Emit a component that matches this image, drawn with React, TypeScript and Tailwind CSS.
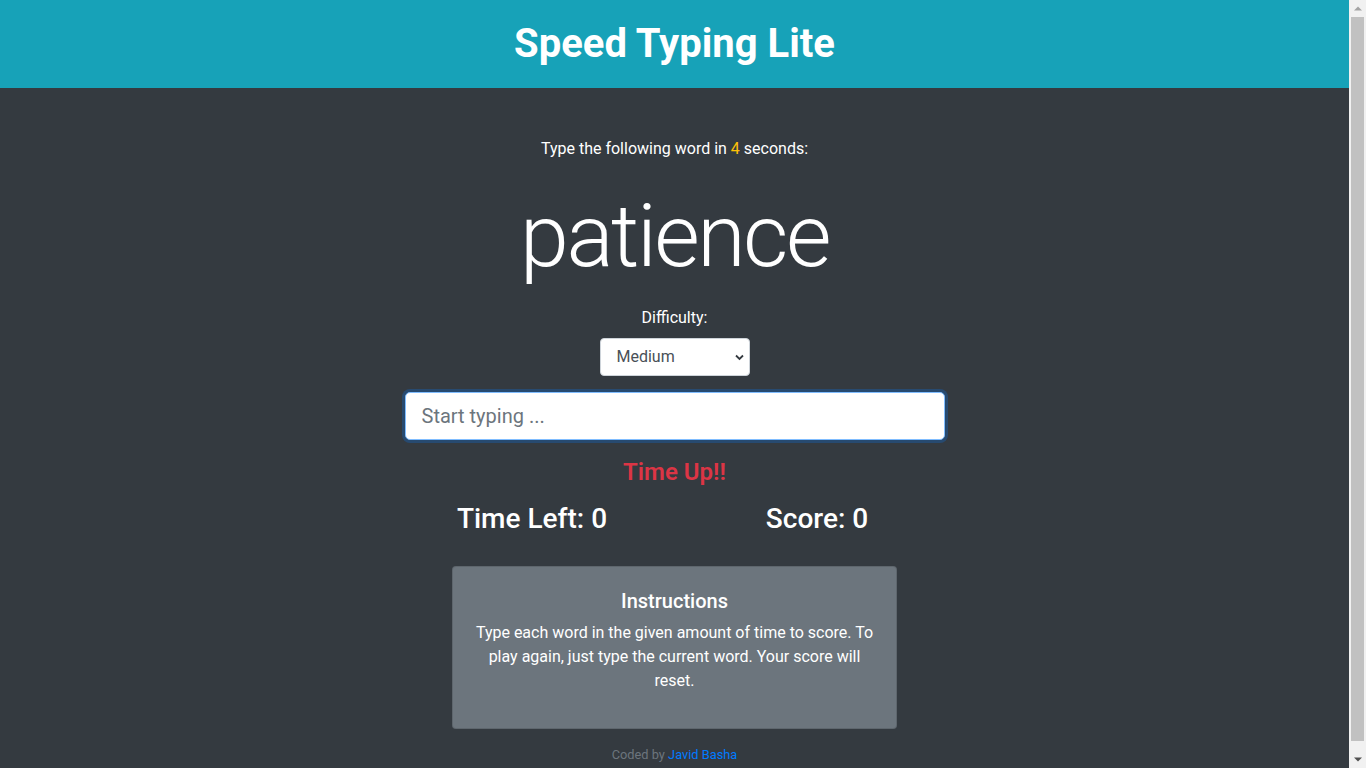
import React from "react";

function Scrollbar() {
  return (
    <div className="sticky top-0 flex h-screen w-[17px] shrink-0 flex-col self-start bg-[#f1f1f1]">
      <div className="flex h-[17px] items-center justify-center">
        <svg width="8" height="5" viewBox="0 0 8 5">
          <path d="M0 4.5 L4 0.5 L8 4.5 Z" fill="#a3a3a3" />
        </svg>
      </div>
      <div className="mx-[2px] h-[724px] bg-[#c1c1c1]" />
      <div className="flex-1" />
      <div className="flex h-[17px] items-center justify-center">
        <svg width="8" height="5" viewBox="0 0 8 5">
          <path d="M0 0.5 L8 0.5 L4 4.5 Z" fill="#505050" />
        </svg>
      </div>
    </div>
  );
}

export default function App() {
  return (
    <div className="flex bg-[#343a40] font-['Roboto',sans-serif] text-white">
      <div className="min-h-[779px] min-w-0 flex-1">
        <header className="flex h-[88px] items-center justify-center bg-[#17a2b8]">
          <h1 className="text-[40px] font-bold leading-[48px] text-white">Speed Typing Lite</h1>
        </header>

        <main className="flex flex-col items-center">
          <p className="mt-[49px] text-[16px] leading-[24px] text-white">
            Type the following word in <span className="text-[#ffc107]">4</span> seconds:
          </p>

          <h2 className="mt-[22px] text-[88px] font-light leading-[1.2] tracking-[-2.5px] text-white">patience</h2>

          <label className="mt-[17px] text-[16px] leading-[24px] text-white">Difficulty:</label>

          <div className="relative mt-[8px] h-[38px] w-[150px]">
            <select
              defaultValue="medium"
              className="h-full w-full appearance-none rounded-[4px] border border-[#ced4da] bg-white pl-[16px] pr-[28px] text-[16px] text-[#495057] outline-none"
            >
              <option value="easy">Easy</option>
              <option value="medium">Medium</option>
              <option value="hard">Hard</option>
            </select>
            <svg
              className="pointer-events-none absolute right-[6px] top-[16px]"
              width="9"
              height="7"
              viewBox="0 0 9 7"
              fill="none"
            >
              <path d="M1 1.5 L4.5 5 L8 1.5" stroke="#343a40" strokeWidth="1.8" />
            </svg>
          </div>

          <input
            type="text"
            placeholder="Start typing ..."
            className="mt-[16px] h-[48px] w-[540px] rounded-[5px] border border-[#80bdff] bg-white px-[16px] text-[20px] text-[#495057] shadow-[0_0_0_3px_rgba(0,123,255,0.25)] outline-none placeholder:text-[#6c757d]"
          />

          <h4 className="mt-[18px] text-[24px] font-semibold leading-[29px] text-[#dc3545]">Time Up!!</h4>

          <div className="mt-[15px] grid w-[570px] grid-cols-2">
            <h3 className="text-center text-[28px] font-medium leading-[34px] text-white">Time Left: 0</h3>
            <h3 className="text-center text-[28px] font-medium leading-[34px] text-white">Score: 0</h3>
          </div>

          <div className="mt-[30px] w-[445px] rounded-[4px] border border-[rgba(0,0,0,0.125)] bg-[#6c757d] px-[20px] pb-[20px] pt-[22px] text-center">
            <h5 className="mb-[8px] text-[20px] font-medium leading-[24px] text-white">Instructions</h5>
            <p className="mb-[15px] text-[16px] leading-[24px] text-white">
              Type each word in the given amount of time to score. To play again, just type the current word. Your
              score will reset.
            </p>
          </div>

          <footer className="mt-[16px] text-[12.8px] leading-[19px] text-[#6c757d]">
            Coded by <a className="text-[#007bff]">Javid Basha</a>
          </footer>
        </main>
      </div>
      <Scrollbar />
    </div>
  );
}
